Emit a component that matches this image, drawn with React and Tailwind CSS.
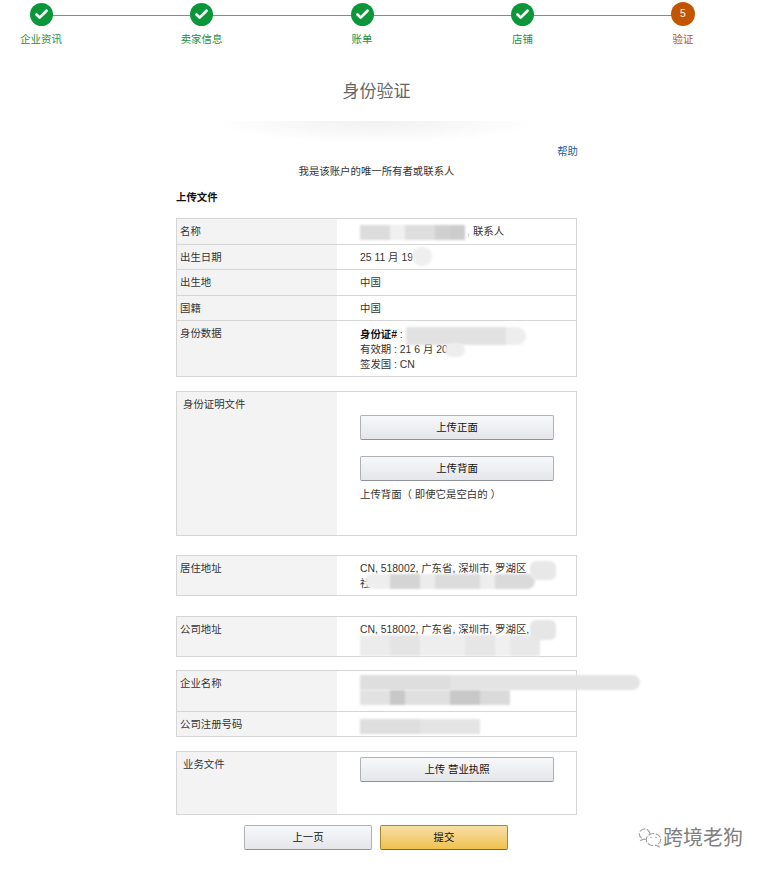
import { Check } from "lucide-react"

const font = "font-['Liberation_Sans','Noto_Sans_CJK_SC',sans-serif]"

const steps = ["企业资讯", "卖家信息", "账单", "店铺"]

function Step({ label }) {
  return (
    <div className="w-[80px] flex flex-col items-center relative">
      <div className="w-[23px] h-[23px] rounded-full bg-[#0b963a] flex items-center justify-center">
        <Check size={15} strokeWidth={4.5} className="text-white" />
      </div>
      <div className="mt-[7px] leading-[14px] text-[#23903f]">{label}</div>
    </div>
  )
}

function Stepper() {
  return (
    <div className="relative w-[722px] ml-[1px] pt-[3px] flex justify-between">
      <div className="absolute left-[40px] right-[40px] top-[15px] h-px bg-[#8a8a8a]" />
      {steps.map((s) => (
        <Step key={s} label={s} />
      ))}
      <div className="w-[80px] flex flex-col items-center relative">
        <div className="w-[24px] h-[24px] -mt-[1px] rounded-full bg-[#c45500] text-white flex items-center justify-center">5</div>
        <div className="mt-[7px] leading-[14px] text-[#c45500]">验证</div>
      </div>
    </div>
  )
}

function Row({ label, h, children, first }) {
  return (
    <div className={`flex ${h} ${first ? "" : "border-t border-[#d5d5d5]"}`}>
      <div className="w-[160px] shrink-0 bg-[#f3f3f3] pl-[3px] pt-[6px] leading-[14px]">{label}</div>
      <div className="relative flex-1 pl-[23px] pt-[6px] leading-[14px]">{children}</div>
    </div>
  )
}

function Box({ className, children }) {
  return <div className={`w-[401px] border border-[#d5d5d5] ${className}`}>{children}</div>
}

function UploadButton({ children, className }) {
  return (
    <button className={`block w-[194px] h-[25px] rounded-[2px] border border-[#adb1b8] border-b-[#8f9399] bg-gradient-to-b from-[#f7f8fa] to-[#e4e6e9] text-[#111] ${className}`}>
      {children}
    </button>
  )
}

// pixel blocks that hide personal data
function Mosaic({ blocks, className }) {
  return (
    <div className={`flex h-[15px] blur-[1px] ${className}`}>
      {blocks.map((b, i) => (
        <div key={i} className={`h-full ${b}`} />
      ))}
    </div>
  )
}

function WeChatIcon() {
  return (
    <svg width="24" height="22" viewBox="0 0 24 22" fill="none" stroke="#9a9a9a" strokeWidth="1.1" strokeLinecap="round" strokeDasharray="5 2.5">
      <path d="M12 6.5C11 3 8.5 1.5 6 2 3 2.6 1 5 1.3 7.5c.2 1.5 1 2.5 2 3.4L2.6 13.5l3-1.4c.7.2 1.3.3 2 .2" />
      <path d="M15.5 6.5c-4 0-7.2 2.6-7.2 6s3.2 6 7.2 6c.9 0 1.7-.1 2.5-.4l3 1.7-.7-3c1.5-1.1 2.4-2.6 2.4-4.3 0-3.4-3.2-6-7.2-6Z" />
      <circle cx="13" cy="10.5" r=".7" fill="#9a9a9a" stroke="none" />
      <circle cx="18" cy="10.5" r=".7" fill="#9a9a9a" stroke="none" />
    </svg>
  )
}

export default function App() {
  return (
    <div className={`relative w-[768px] h-[872px] overflow-hidden bg-white text-[10.4px] text-[#333] ${font}`}>
      <Stepper />

      <div className="w-[401px] ml-[176px]">
        <h1 className="mt-[33px] h-[24px] leading-[24px] text-center text-[17px] text-[#666]">身份验证</h1>
        <div className="mt-[17px] ml-[30px] w-[340px] h-[23px] bg-[radial-gradient(ellipse_at_top,#f0f0f0,#ffffff_68%)]" />
        <div className="mt-[1px] -mr-[1px] leading-[14px] text-right text-[#1f5c99]">帮助</div>
        <div className="mt-[6px] leading-[14px] text-center">我是该账户的唯一所有者或联系人</div>
        <div className="mt-[12px] leading-[14px] font-bold text-[#111]">上传文件</div>

        <Box className="mt-[13px]">
          <Row first label="名称" h="h-[25px]">
            <div className="flex items-center -mt-[1px]">
              <Mosaic className="mt-[1px]" blocks={["w-[30px] bg-[#dcdcdc]", "w-[15px] bg-[#f0f0f0]", "w-[30px] bg-[#dedede]", "w-[15px] bg-[#d0d0d0]", "w-[15px] bg-[#cccccc]"]} />
              <span className="ml-[2px] text-[#bbb]">,</span>
              <span className="ml-[3px]">联系人</span>
            </div>
          </Row>
          <Row label="出生日期" h="h-[25px]">
            25 11 月 19
            <div className="absolute left-[75px] top-[2px] w-[20px] h-[19px] rounded-full bg-[#efefef] blur-[1px]" />
          </Row>
          <Row label="出生地" h="h-[26px]">中国</Row>
          <Row label="国籍" h="h-[25px]">中国</Row>
          <Row label="身份数据" h="h-[56px]">
            <div className="leading-[15px]">
              <div><b className="text-[#111]">身份证#</b> :</div>
              <div>有效期 : 21 6 月 20</div>
              <div>签发国 : CN</div>
            </div>
            <Mosaic className="absolute left-[69px] top-[6px] !h-[18px]" blocks={["w-[100px] bg-[#e2e2e2]", "w-[20px] bg-[#eeeeee] rounded-r-full"]} />
            <div className="absolute left-[108px] top-[22px] w-[20px] h-[14px] rounded-full bg-[#ededed] blur-[1px]" />
          </Row>
        </Box>

        <Box className="mt-[14px] h-[145px] flex">
          <div className="w-[160px] bg-[#f3f3f3] pl-[6px] pt-[6px] leading-[14px]">身份证明文件</div>
          <div className="pl-[23px] pt-[23px]">
            <UploadButton>上传正面</UploadButton>
            <UploadButton className="mt-[16px]">上传背面</UploadButton>
            <div className="mt-[7px] leading-[14px]">上传背面（ 即使它是空白的 ）</div>
          </div>
        </Box>

        <Box className="mt-[19px]">
          <Row first label="居住地址" h="h-[39px]">
            <div>CN, 518002, 广东省, 深圳市, 罗湖区</div>
            <div className="mt-[1px]">社</div>
            <Mosaic className="absolute left-[28px] top-[18px] rounded-full overflow-hidden" blocks={["w-[25px] bg-[#eeeeee]", "w-[30px] bg-[#d4d4d4]", "w-[15px] bg-[#ececec]", "w-[45px] bg-[#dcdcdc]", "w-[15px] bg-[#eeeeee]", "w-[40px] bg-[#dadada]"]} />
            <div className="absolute left-[193px] top-[5px] w-[26px] h-[19px] rounded-[6px] bg-[#e8e8e8] blur-[1px]" />
          </Row>
        </Box>

        <Box className="mt-[20px]">
          <Row first label="公司地址" h="h-[39px]">
            <div>CN, 518002, 广东省, 深圳市, 罗湖区,</div>
            <Mosaic className="absolute left-[23px] top-[18px] !h-[21px]" blocks={["w-[30px] bg-[#ececec]", "w-[30px] bg-[#e4e4e4]", "w-[45px] bg-[#eeeeee]", "w-[30px] bg-[#e6e6e6]", "w-[15px] bg-[#f0f0f0]", "w-[30px] bg-[#e8e8e8]"]} />
            <div className="absolute left-[193px] top-[3px] w-[26px] h-[20px] rounded-[6px] bg-[#e6e6e6] blur-[1px]" />
          </Row>
        </Box>

        <Box className="mt-[13px] relative">
          <Row first label="企业名称" h="h-[40px]">
            <Mosaic className="absolute left-[23px] top-[4px] w-[280px] rounded-r-full" blocks={["w-[90px] bg-[#dedede]", "w-[190px] bg-[#e4e4e4] rounded-r-full"]} />
            <Mosaic className="absolute left-[23px] top-[19px]" blocks={["w-[30px] bg-[#e2e2e2]", "w-[15px] bg-[#c8c8c8]", "w-[45px] bg-[#e0e0e0]", "w-[30px] bg-[#c8c8c8]", "w-[30px] bg-[#dadada]"]} />
          </Row>
          <Row label="公司注册号码" h="h-[25px]">
            <Mosaic className="absolute left-[23px] top-[7px]" blocks={["w-[60px] bg-[#dedede]", "w-[60px] bg-[#e4e4e4]"]} />
          </Row>
        </Box>

        <Box className="mt-[14px] h-[64px] flex">
          <div className="w-[160px] bg-[#f3f3f3] pl-[6px] pt-[6px] leading-[14px]">业务文件</div>
          <div className="pl-[23px] pt-[5px]">
            <UploadButton>上传 营业执照</UploadButton>
          </div>
        </Box>

        <div className="mt-[10px] ml-[68px] flex gap-[8px]">
          <button className="w-[128px] h-[25px] rounded-[2px] border border-[#adb1b8] border-b-[#8f9399] bg-gradient-to-b from-[#f7f8fa] to-[#e4e6e9] text-[#111]">上一页</button>
          <button className="w-[128px] h-[25px] rounded-[2px] border border-[#a88734] border-b-[#846a29] bg-gradient-to-b from-[#f7dfa5] to-[#f0c14b] text-[#111]">提交</button>
        </div>
      </div>

      <div className="absolute left-[638px] top-[826px] flex items-center gap-[1px] text-[20px] leading-[24px] text-[#808080]">
        <WeChatIcon />
        <span>跨境老狗</span>
      </div>
    </div>
  )
}
